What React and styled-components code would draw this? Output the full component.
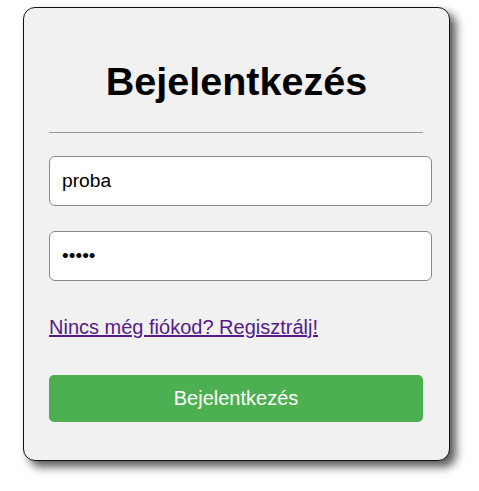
import React from "react";
import styled, { createGlobalStyle } from "styled-components";

const Global = createGlobalStyle`
  html, body { margin: 0; padding: 0; background: #fff; }
  body { font-family: "Liberation Sans", Arial, sans-serif; }
`;

const Page = styled.div`
  min-height: 491px;
  box-sizing: border-box;
  padding: 7px 0 30px 23px;
`;

const Card = styled.form`
  width: 375px;
  padding: 0 25px 38px;
  background: #f1f1f1;
  border: 1px solid #111;
  border-radius: 12px;
  box-shadow: 6px 6px 10px rgba(0, 0, 0, 0.65);
  display: flex;
  flex-direction: column;
  align-items: flex-start;
`;

const Title = styled.h1`
  align-self: stretch;
  margin: 51px 0 0;
  font-size: 39.5px;
  line-height: 45px;
  font-weight: bold;
  text-align: center;
  color: #000;
`;

const Rule = styled.hr`
  align-self: stretch;
  margin: 28px 0 0;
  width: 374px;
  border: none;
  border-top: 1px solid #999;
  height: 0;
`;

const Field = styled.input`
  box-sizing: border-box;
  width: 383px;
  height: 50px;
  margin-top: ${(p) => p.$gap}px;
  padding: 0 12px;
  border: 1px solid #888;
  border-radius: 6px;
  background: #fff;
  font-family: "Liberation Sans", Arial, sans-serif;
  font-size: 19.2px;
  color: #000;
  outline: none;
`;

const Link = styled.a`
  margin-top: 35px;
  font-size: 20px;
  line-height: 23px;
  color: #551a8b;
  text-decoration: underline;
`;

const Button = styled.button`
  box-sizing: border-box;
  width: 374px;
  height: 47px;
  margin-top: 36px;
  border: none;
  border-radius: 5px;
  background: #4caf50;
  color: #fff;
  font-family: "Liberation Sans", Arial, sans-serif;
  font-size: 20px;
  cursor: pointer;
`;

export default function App() {
  return (
    <>
      <Global />
      <Page>
        <Card onSubmit={(e) => e.preventDefault()}>
          <Title>Bejelentkezés</Title>
          <Rule />
          <Field $gap={23} type="text" defaultValue="proba" />
          <Field $gap={25} type="password" defaultValue="12345" />
          <Link href="#">Nincs még fiókod? Regisztrálj!</Link>
          <Button type="submit">Bejelentkezés</Button>
        </Card>
      </Page>
    </>
  );
}
